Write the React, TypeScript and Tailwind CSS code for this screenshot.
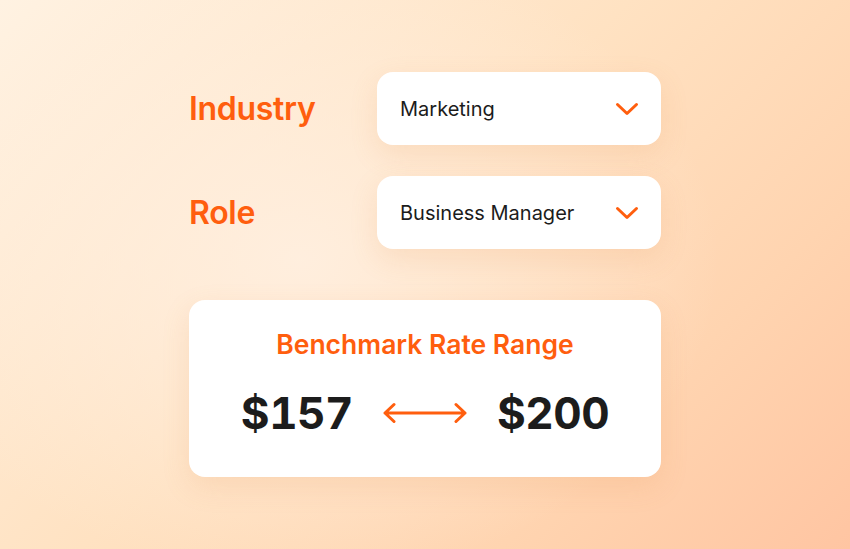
import React from "react";

const Chevron = () => (
  <svg width="24" height="16" viewBox="0 0 24 16" fill="none" className="shrink-0">
    <path d="M2.5 3.5 L12 12.5 L21.5 3.5" stroke="#ff5e0e" strokeWidth="3" strokeLinecap="round" strokeLinejoin="round" />
  </svg>
);

const DoubleArrow = () => (
  <svg width="84" height="28" viewBox="0 0 84 28" fill="none" className="shrink-0">
    <path d="M2 14 H82 M11 5.5 L2 14 L11 22.5 M73 5.5 L82 14 L73 22.5" stroke="#ff5e0e" strokeWidth="3" strokeLinecap="round" strokeLinejoin="round" />
  </svg>
);

const Field = ({ label, value }: { label: string; value: string }) => (
  <div className="flex items-center">
    <div className="w-[188px] text-[32px] font-semibold text-[#ff5e0e] tracking-[-0.3px]">{label}</div>
    <div className="flex h-[73px] flex-1 items-center justify-between rounded-2xl bg-white pl-[23px] pr-[22px] shadow-[0_10px_28px_rgba(225,140,80,0.16)]">
      <span className="text-[20px] font-normal text-[#1c1c1c]">{value}</span>
      <Chevron />
    </div>
  </div>
);

export default function App() {
  return (
    <div
      className="relative h-[549px] w-[850px] overflow-hidden"
      style={{
        fontFamily: "Inter, 'Noto Sans', sans-serif",
        background:
          "radial-gradient(ellipse 420px 320px at 300px 260px, rgba(255,240,226,0.85), rgba(255,240,226,0) 100%), linear-gradient(135deg, #fff2e2 0%, #ffe2c2 45%, #ffd4b0 75%, #ffc5a2 100%)",
      }}
    >
      <div className="mx-auto flex w-[472px] flex-col pt-[72px]">
        <Field label="Industry" value="Marketing" />
        <div className="h-[31px]" />
        <Field label="Role" value="Business Manager" />
        <div className="mt-[51px] flex h-[177px] flex-col items-center rounded-2xl bg-white pt-[25px] shadow-[0_10px_28px_rgba(225,140,80,0.16)]">
          <div className="text-[26.5px] font-semibold text-[#ff5e0e]">Benchmark Rate Range</div>
          <div className="mt-[15px] flex items-center gap-[30px]">
            <span className="text-[44px] font-bold tabular-nums tracking-[-0.5px] text-[#1c1c1c]">$157</span>
            <DoubleArrow />
            <span className="text-[44px] font-bold tabular-nums tracking-[-0.5px] text-[#1c1c1c]">$200</span>
          </div>
        </div>
      </div>
    </div>
  );
}
